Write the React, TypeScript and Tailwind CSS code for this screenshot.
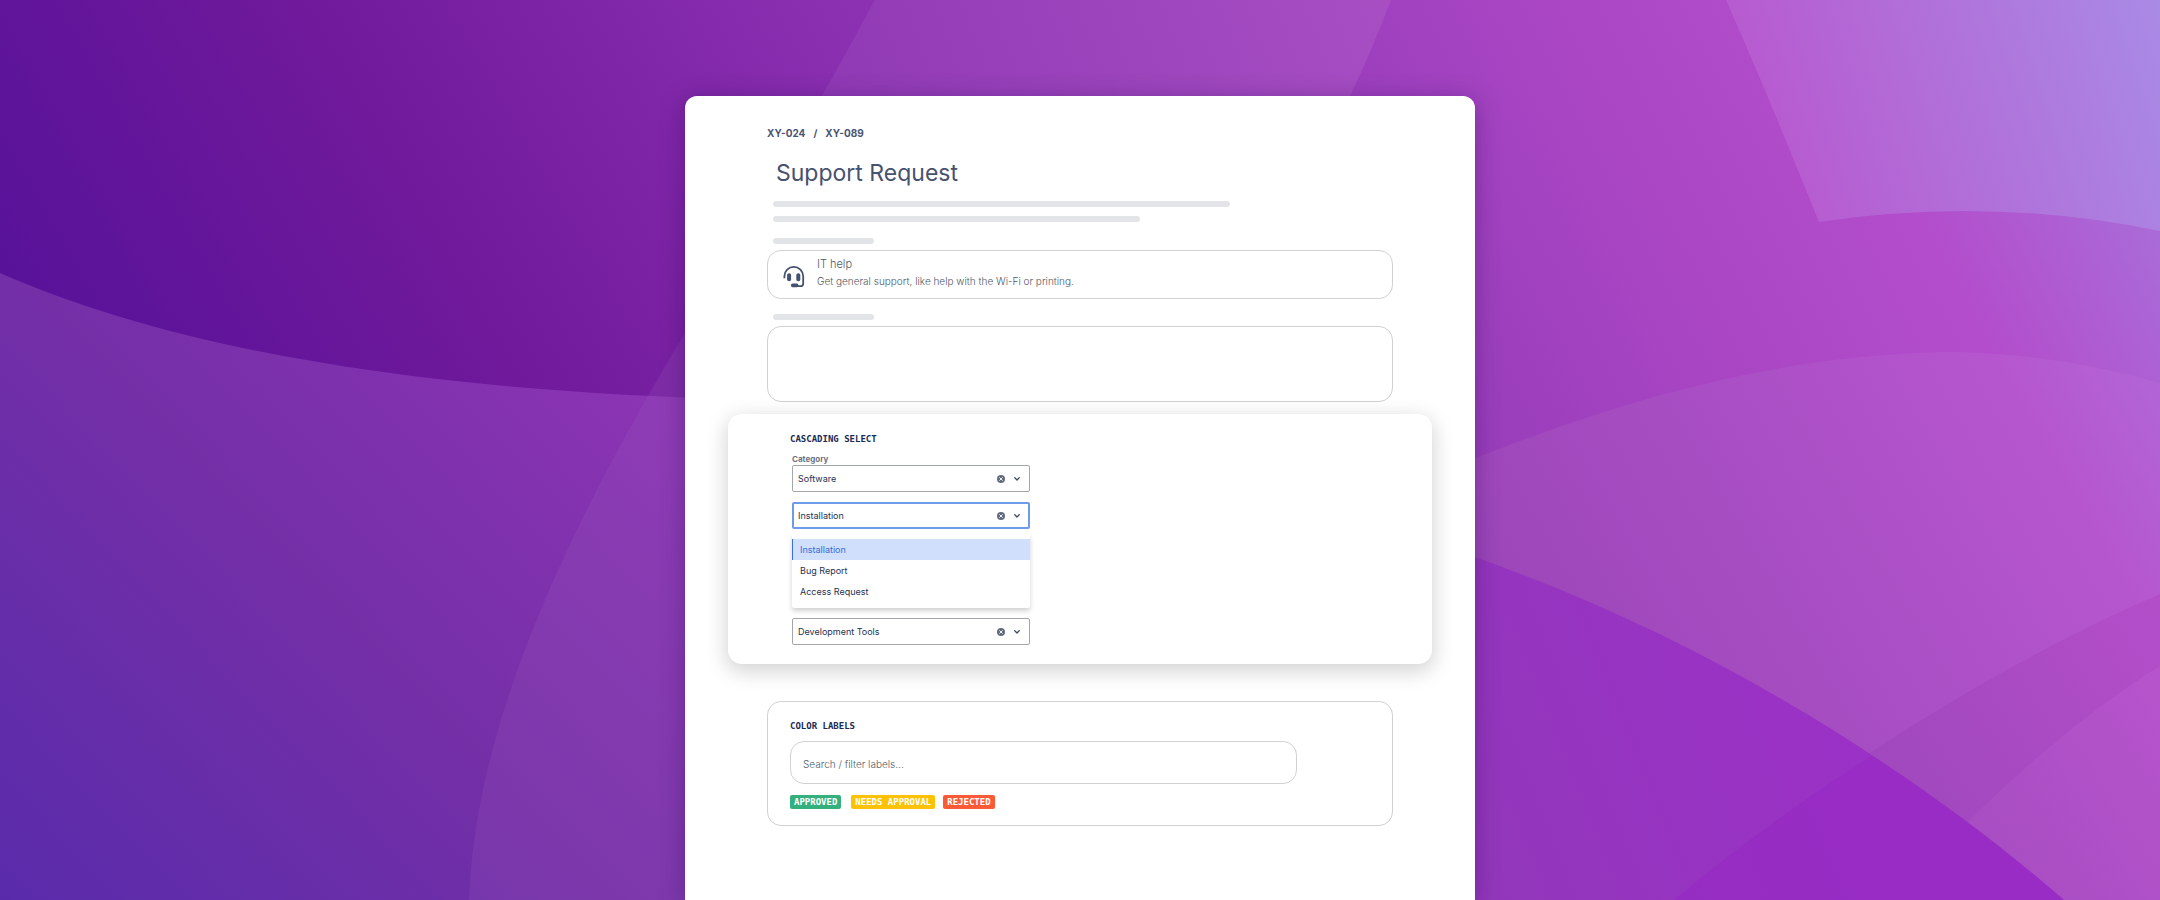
import { useState } from "react";

function Backdrop() {
  return (
    <svg
      className="absolute inset-0 h-full w-full"
      viewBox="0 0 2160 900"
      preserveAspectRatio="xMidYMid slice"
      aria-hidden="true"
    >
      <defs>
        <linearGradient id="dark" gradientUnits="userSpaceOnUse" x1="0" y1="273" x2="780" y2="-175">
          <stop offset="0" stopColor="#571299" />
          <stop offset="0.44" stopColor="#70199b" />
          <stop offset="1" stopColor="#8d32b3" />
        </linearGradient>
        <linearGradient id="lower" gradientUnits="userSpaceOnUse" x1="0" y1="900" x2="590" y2="340">
          <stop offset="0" stopColor="#592bab" />
          <stop offset="0.55" stopColor="#742fa7" />
          <stop offset="1" stopColor="#8b34b4" />
        </linearGradient>
        <linearGradient id="upper" gradientUnits="userSpaceOnUse" x1="860" y1="200" x2="1380" y2="0">
          <stop offset="0" stopColor="#8f39b4" />
          <stop offset="1" stopColor="#a74ec3" />
        </linearGradient>
        <linearGradient id="right" gradientUnits="userSpaceOnUse" x1="1400" y1="440" x2="2140" y2="60">
          <stop offset="0" stopColor="#943bb9" />
          <stop offset="0.36" stopColor="#a845c3" />
          <stop offset="0.68" stopColor="#b34dcb" />
          <stop offset="1" stopColor="#a774dc" />
        </linearGradient>
        <linearGradient id="corner" gradientUnits="userSpaceOnUse" x1="1770" y1="130" x2="2160" y2="0">
          <stop offset="0" stopColor="#b75bd0" />
          <stop offset="1" stopColor="#a98ae5" />
        </linearGradient>
        <linearGradient id="leaf" gradientUnits="userSpaceOnUse" x1="1540" y1="680" x2="2180" y2="310">
          <stop offset="0" stopColor="#9b46b9" />
          <stop offset="0.75" stopColor="#b656ce" />
          <stop offset="1" stopColor="#b06bd9" />
        </linearGradient>
        <linearGradient id="leafLow" gradientUnits="userSpaceOnUse" x1="1880" y1="790" x2="2160" y2="610">
          <stop offset="0" stopColor="#a048bd" />
          <stop offset="1" stopColor="#b34ec9" />
        </linearGradient>
        <linearGradient id="glow" gradientUnits="userSpaceOnUse" x1="1950" y1="840" x2="2160" y2="700">
          <stop offset="0" stopColor="#c063d4" stopOpacity="0.15" />
          <stop offset="1" stopColor="#c063d4" stopOpacity="0.3" />
        </linearGradient>
        <linearGradient id="deep" gradientUnits="userSpaceOnUse" x1="1476" y1="850" x2="1850" y2="700">
          <stop offset="0" stopColor="#9237bb" />
          <stop offset="1" stopColor="#9b31c7" />
        </linearGradient>
      </defs>
      <rect width="2160" height="900" fill="url(#dark)" />
      <path d="M0 273 C180 352 430 392 760 400 V900 H0 Z" fill="url(#lower)" />
      <path
        d="M875 0 L822 96 Q760 205 685 333 C560 540 475 730 469 900 H1080 V0 Z"
        fill="#9a5abb"
        fillOpacity="0.22"
      />
      <path d="M875 0 Q850 48 822 96 L790 152 H1400 V0 Z" fill="url(#upper)" />
      <path d="M1391 0 Q1372 50 1350 96 L1325 150 V620 H2160 V0 Z" fill="url(#right)" />
      <path d="M1726 0 Q1766 90 1819 222 Q1990 196 2160 231 V0 Z" fill="url(#corner)" />
      <path d="M1400 490 C1600 402 1770 356 1943 352 Q2050 352 2160 383 V900 H1400 Z" fill="url(#leaf)" />
      <path d="M2160 594 Q2020 654 1860 759 V900 H2160 Z" fill="url(#leafLow)" />
      <path d="M2160 666 Q2050 734 1920 870 V900 H2160 Z" fill="url(#glow)" />
      <path d="M1400 533 C1660 610 1890 750 2064 900 H1400 Z" fill="url(#deep)" />
      <path d="M1674 900 Q1770 820 1872 756 Q1975 822 2064 900 Z" fill="#962ac3" fillOpacity="0.65" />
    </svg>
  );
}

function HeadsetIcon() {
  return (
    <svg width="22" height="24" viewBox="0 0 22 24" fill="none" className="mt-1" aria-hidden="true">
      <path
        d="M1.4 13.2V11.2A9.4 9.4 0 0 1 20.2 11.2V18.4A2.8 2.8 0 0 1 17.4 21.2H11"
        stroke="#44516f"
        strokeWidth="1.8"
      />
      <rect x="4.1" y="8.2" width="4" height="8" rx="1.9" fill="#44516f" />
      <rect x="13.3" y="8.2" width="4" height="8" rx="1.9" fill="#44516f" />
      <rect x="8" y="18.4" width="7.4" height="3.8" rx="1.6" fill="#44516f" />
    </svg>
  );
}

type PickerProps = {
  id: string;
  label: string;
  options: string[];
  initial: string;
  active?: boolean;
};

function Picker({ id, label, options, initial, active }: PickerProps) {
  const [value, setValue] = useState(initial);
  return (
    <div
      className={
        active
          ? "flex h-[27px] items-center rounded-xs border-2 border-[#6f9bea] bg-white pr-2 pl-1"
          : "flex h-[27px] items-center rounded-xs border border-[#a3a6ae] bg-white pr-[9px] pl-[5px]"
      }
    >
      <select
        id={id}
        aria-label={label}
        value={value}
        onChange={(e) => setValue(e.target.value)}
        className="h-full min-w-0 flex-1 appearance-none bg-transparent text-[9px] text-[#27304f] outline-none"
      >
        <option value="" />
        {options.map((o) => (
          <option key={o}>{o}</option>
        ))}
      </select>
      <button type="button" aria-label={`Clear ${label}`} onClick={() => setValue("")} className="mr-[9px] shrink-0">
        <svg width="8" height="8" viewBox="0 0 8 8" className="block">
          <circle cx="4" cy="4" r="4" fill="#626a7d" />
          <path d="M2.6 2.6 5.4 5.4M5.4 2.6 2.6 5.4" stroke="#fff" strokeWidth="0.9" strokeLinecap="round" />
        </svg>
      </button>
      <svg width="6" height="4" viewBox="0 0 6 4" className="shrink-0" fill="none" aria-hidden="true">
        <path d="M0.8 0.8 3 3 5.2 0.8" stroke="#414a61" strokeWidth="1.3" strokeLinecap="round" strokeLinejoin="round" />
      </svg>
    </div>
  );
}

const requestTypes = ["Installation", "Bug Report", "Access Request"];

function CascadingSelect() {
  return (
    <section className="-mx-[39px] mt-3 rounded-[14px] bg-white px-16 pt-[17px] pb-[19px] shadow-[0_6px_20px_2px_rgba(0,0,0,0.17)]">
      <h2 className="-ml-0.5 font-['DejaVu_Sans_Mono',monospace] text-[9px] leading-4 font-bold text-[#1b2b52]">
        CASCADING SELECT
      </h2>
      <div className="w-[238px] max-w-full">
        <label htmlFor="category" className="mt-[7px] block text-[8px] leading-[11px] font-bold text-[#6c7385]">
          Category
        </label>
        <Picker id="category" label="Category" options={["Software", "Hardware"]} initial="Software" />
        <div className="mt-2.5">
          <Picker id="type" label="Request type" options={requestTypes} initial="Installation" active />
        </div>
        <ul
          role="listbox"
          aria-label="Request type options"
          className="mt-1 rounded-xs pt-1.5 pb-1.5 text-[9px] leading-[21px] text-[#27304f] shadow-[0_3px_5px_rgba(0,0,0,0.18)]"
        >
          {requestTypes.map((t, i) => (
            <li
              key={t}
              role="option"
              aria-selected={i === 0}
              className={
                i === 0
                  ? "border-l border-[#3c70dc] bg-[#d0dffb] pl-[7px] text-[#3a6bd6]"
                  : "pl-2"
              }
            >
              {t}
            </li>
          ))}
        </ul>
        <div className="mt-2.5">
          <Picker id="tool" label="Tool" options={["Development Tools"]} initial="Development Tools" />
        </div>
      </div>
    </section>
  );
}

function ColorLabels() {
  return (
    <section className="mt-[37px] rounded-[14px] border border-[#cfd1d3] px-[22px] pt-4 pb-4 font-['DejaVu_Sans_Mono',monospace] text-[9px]">
      <h2 className="leading-4 font-bold text-[#1b2b52]">COLOR LABELS</h2>
      <input
        type="search"
        aria-label="Search or filter labels"
        placeholder="Search / filter labels..."
        className="mt-[7px] block h-[43px] w-full max-w-[507px] appearance-none rounded-[14px] border border-[#cfd1d3] px-3 pt-0.5 font-[Inter,sans-serif] text-[10px] font-light text-[#4b5563] outline-none placeholder:text-[#4f5968]"
      />
      <div className="mt-[11px] flex leading-[14px] font-bold text-white">
        <span className="rounded-[2px] bg-[#34b07d] px-1">APPROVED</span>
        <span className="ml-2.5 rounded-[2px] bg-[#fcc203] px-1">NEEDS APPROVAL</span>
        <span className="ml-2 rounded-[2px] bg-[#fb5a36] px-1">REJECTED</span>
      </div>
    </section>
  );
}

export default function App() {
  return (
    <div className="relative flex min-h-screen flex-col overflow-hidden bg-[#8031ab] pt-24 font-[Inter,sans-serif]">
      <Backdrop />
      <main className="relative mx-auto w-full max-w-[790px] flex-1 rounded-t-xl bg-white px-[82px] pt-[29px] pb-16 shadow-[0_4px_24px_rgba(40,10,80,0.35)]">
        <nav aria-label="Breadcrumb" className="flex gap-2 text-[10px] leading-4 font-bold text-[#4a5573]">
          <a href="#xy-024">XY-024</a>
          <span>/</span>
          <a href="#xy-089">XY-089</a>
        </nav>
        <h1 className="mt-4 pl-[9px] text-[23px] leading-8 text-[#47526f]">Support Request</h1>
        <div className="mt-3 ml-1.5 h-1.5 w-[457px] max-w-full rounded-full bg-[#e2e4e7]" />
        <div className="mt-[9px] ml-1.5 h-1.5 w-[367px] max-w-full rounded-full bg-[#e2e4e7]" />
        <div className="mt-4 ml-1.5 h-1.5 w-[101px] rounded-full bg-[#e2e4e7]" />
        <section className="mt-1.5 flex h-[49px] items-center rounded-[14px] border border-[#cfd1d3] pl-[15px] text-[#4f5968]">
          <HeadsetIcon />
          <div className="ml-3 font-light">
            <h2 className="-mt-1 text-[11px] leading-[18px]">IT help</h2>
            <p className="text-[10px] leading-[17px]">Get general support, like help with the Wi-Fi or printing.</p>
          </div>
        </section>
        <div className="mt-[15px] ml-1.5 h-1.5 w-[101px] rounded-full bg-[#e2e4e7]" />
        <textarea
          aria-label="Description"
          className="mt-1.5 block h-[76px] w-full resize-none rounded-[14px] border border-[#cfd1d3] bg-white px-4 py-3 text-xs outline-none"
        />
        <CascadingSelect />
        <ColorLabels />
      </main>
    </div>
  );
}
